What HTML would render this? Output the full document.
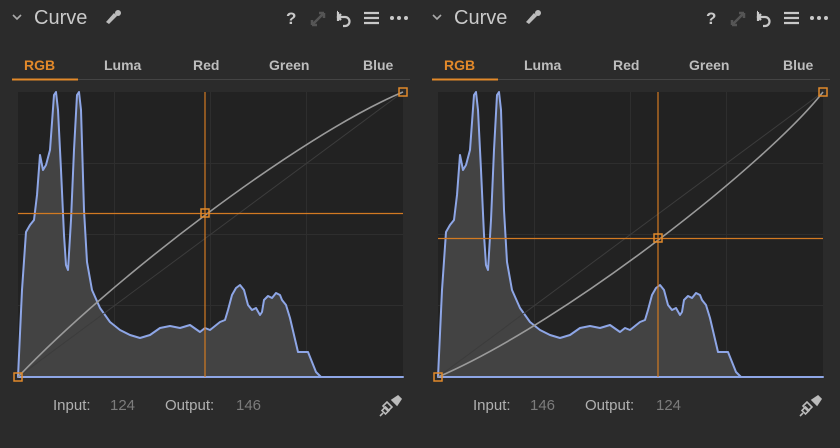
<!DOCTYPE html>
<html><head><meta charset="utf-8"><style>
html,body{margin:0;padding:0;background:#2b2b2b;width:840px;height:448px;overflow:hidden;font-family:"Liberation Sans",sans-serif}
svg{display:block}
</style></head><body>
<svg width="840" height="448" viewBox="0 0 840 448" xmlns="http://www.w3.org/2000/svg" font-family="Liberation Sans, sans-serif">
<rect width="840" height="448" fill="#2b2b2b"/>
<defs>
<g id="hdr">
  <path d="M13 15 l4 4 l4 -4" stroke="#aaa" stroke-width="1.6" fill="none"/>
  <text x="34" y="24" font-size="20" fill="#c9c9c9">Curve</text>
  <path d="M106 22 l8 -9 l3 3 l-8 8 z" fill="#bbb"/><circle cx="118" cy="13" r="3" fill="#bbb"/>
  <text x="286" y="24" font-size="17" font-weight="bold" fill="#c8c8c8">?</text>
  <path d="M312 25 l12 -12 M312 25 v-5 M312 25 h5 M324 13 v5 M324 13 h-5" stroke="#555" stroke-width="2.5" fill="none"/>
  <path d="M338 12 v9 M338 12 h-1 M341 14 l-3 3 l3 3 M338 17 h7 a4 4 0 0 1 0 9 h-2" stroke="#c8c8c8" stroke-width="2.2" fill="none"/>
  <path d="M364 13h15M364 18h15M364 23h15" stroke="#c8c8c8" stroke-width="2.2"/>
  <circle cx="392" cy="18" r="2" fill="#c8c8c8"/><circle cx="399" cy="18" r="2" fill="#c8c8c8"/><circle cx="406" cy="18" r="2" fill="#c8c8c8"/>
  <text x="24" y="70" font-size="14" font-weight="bold" fill="#e2892a">RGB</text>
  <text x="104" y="70" font-size="14" font-weight="bold" fill="#bdbdbd">Luma</text>
  <text x="193" y="70" font-size="14" font-weight="bold" fill="#bdbdbd">Red</text>
  <text x="269" y="70" font-size="14" font-weight="bold" fill="#bdbdbd">Green</text>
  <text x="363" y="70" font-size="14" font-weight="bold" fill="#bdbdbd">Blue</text>
  <rect x="12" y="79" width="398" height="1" fill="#444"/>
  <rect x="12" y="78.5" width="66" height="2" fill="#e2892a"/>
  <rect x="18" y="92" width="385" height="285" fill="#222"/>
  <path d="M114.5 92v285M210.5 92v285M306.5 92v285M18 163.5h385M18 234.5h385M18 305.5h385" stroke="#2e2e2e" stroke-width="1"/>
  <path d="M18 377 L22 290 L26 232 L30 225 L34 220 L37 195 L40 155 L43 170 L46 165 L50 150 L54 95 L56 92 L58 110 L61 170 L64 235 L66 265 L68 270 L71 220 L74 150 L77 95 L79 92 L81 110 L84 210 L87 262 L92 290 L100 308 L110 322 L120 330 L130 335 L140 338 L150 335 L160 328 L170 326 L180 328 L190 325 L200 332 L205 328 L210 330 L215 326 L220 322 L225 320 L228 310 L232 295 L236 288 L240 285 L244 290 L248 305 L252 310 L256 308 L260 315 L262 312 L264 300 L268 296 L272 298 L276 293 L280 295 L282 300 L286 305 L290 318 L294 335 L298 352 L308 352 L312 362 L316 372 L321 377 L403 377 Z" fill="#434343" stroke="#8ea6e6" stroke-width="2" stroke-linejoin="round"/>
  <line x1="18" y1="377" x2="403" y2="92" stroke="#3c3c3c" stroke-width="1"/>
</g>
</defs>
<use href="#hdr"/>
<use href="#hdr" x="420"/>
<path d="M18 377 C 110 280, 300 135, 403 92" stroke="#9a9a9a" stroke-width="1.6" fill="none"/>
<path d="M205 92v285M18 213.5h385" stroke="#d27a22" stroke-width="1.2"/>
<rect x="201" y="209" width="8" height="8" fill="none" stroke="#e2892a" stroke-width="1.5"/>
<rect x="14" y="373" width="8" height="8" fill="none" stroke="#e2892a" stroke-width="1.5"/>
<rect x="399" y="88" width="8" height="8" fill="none" stroke="#e2892a" stroke-width="1.5"/>
<path d="M438 377 C 570 320, 770 160, 823 92" stroke="#9a9a9a" stroke-width="1.6" fill="none"/>
<path d="M658 92v285M438 238.5h385" stroke="#d27a22" stroke-width="1.2"/>
<rect x="654" y="234" width="8" height="8" fill="none" stroke="#e2892a" stroke-width="1.5"/>
<rect x="434" y="373" width="8" height="8" fill="none" stroke="#e2892a" stroke-width="1.5"/>
<rect x="819" y="88" width="8" height="8" fill="none" stroke="#e2892a" stroke-width="1.5"/>
<text x="53" y="410" font-size="15" fill="#b0b0b0">Input:</text><text x="110" y="410" font-size="15" fill="#7c7c7c">124</text>
<text x="165" y="410" font-size="15" fill="#b0b0b0">Output:</text><text x="236" y="410" font-size="15" fill="#7c7c7c">146</text>
<text x="473" y="410" font-size="15" fill="#b0b0b0">Input:</text><text x="530" y="410" font-size="15" fill="#7c7c7c">146</text>
<text x="585" y="410" font-size="15" fill="#b0b0b0">Output:</text><text x="656" y="410" font-size="15" fill="#7c7c7c">124</text>
<g id="dr" stroke="#bbb" stroke-width="1.6" fill="none">
  <path d="M380 416 l3 -3 M383 406 l4 -4 l5 5 l-4 4 z"/><rect x="383" y="408" width="5" height="5" transform="rotate(45 385.5 410.5)"/>
  <path d="M392 400 l6 -4 l3 3 l-4 6 z" fill="#bbb"/>
</g>
<use href="#dr" x="420"/>
</svg>
</body></html>
